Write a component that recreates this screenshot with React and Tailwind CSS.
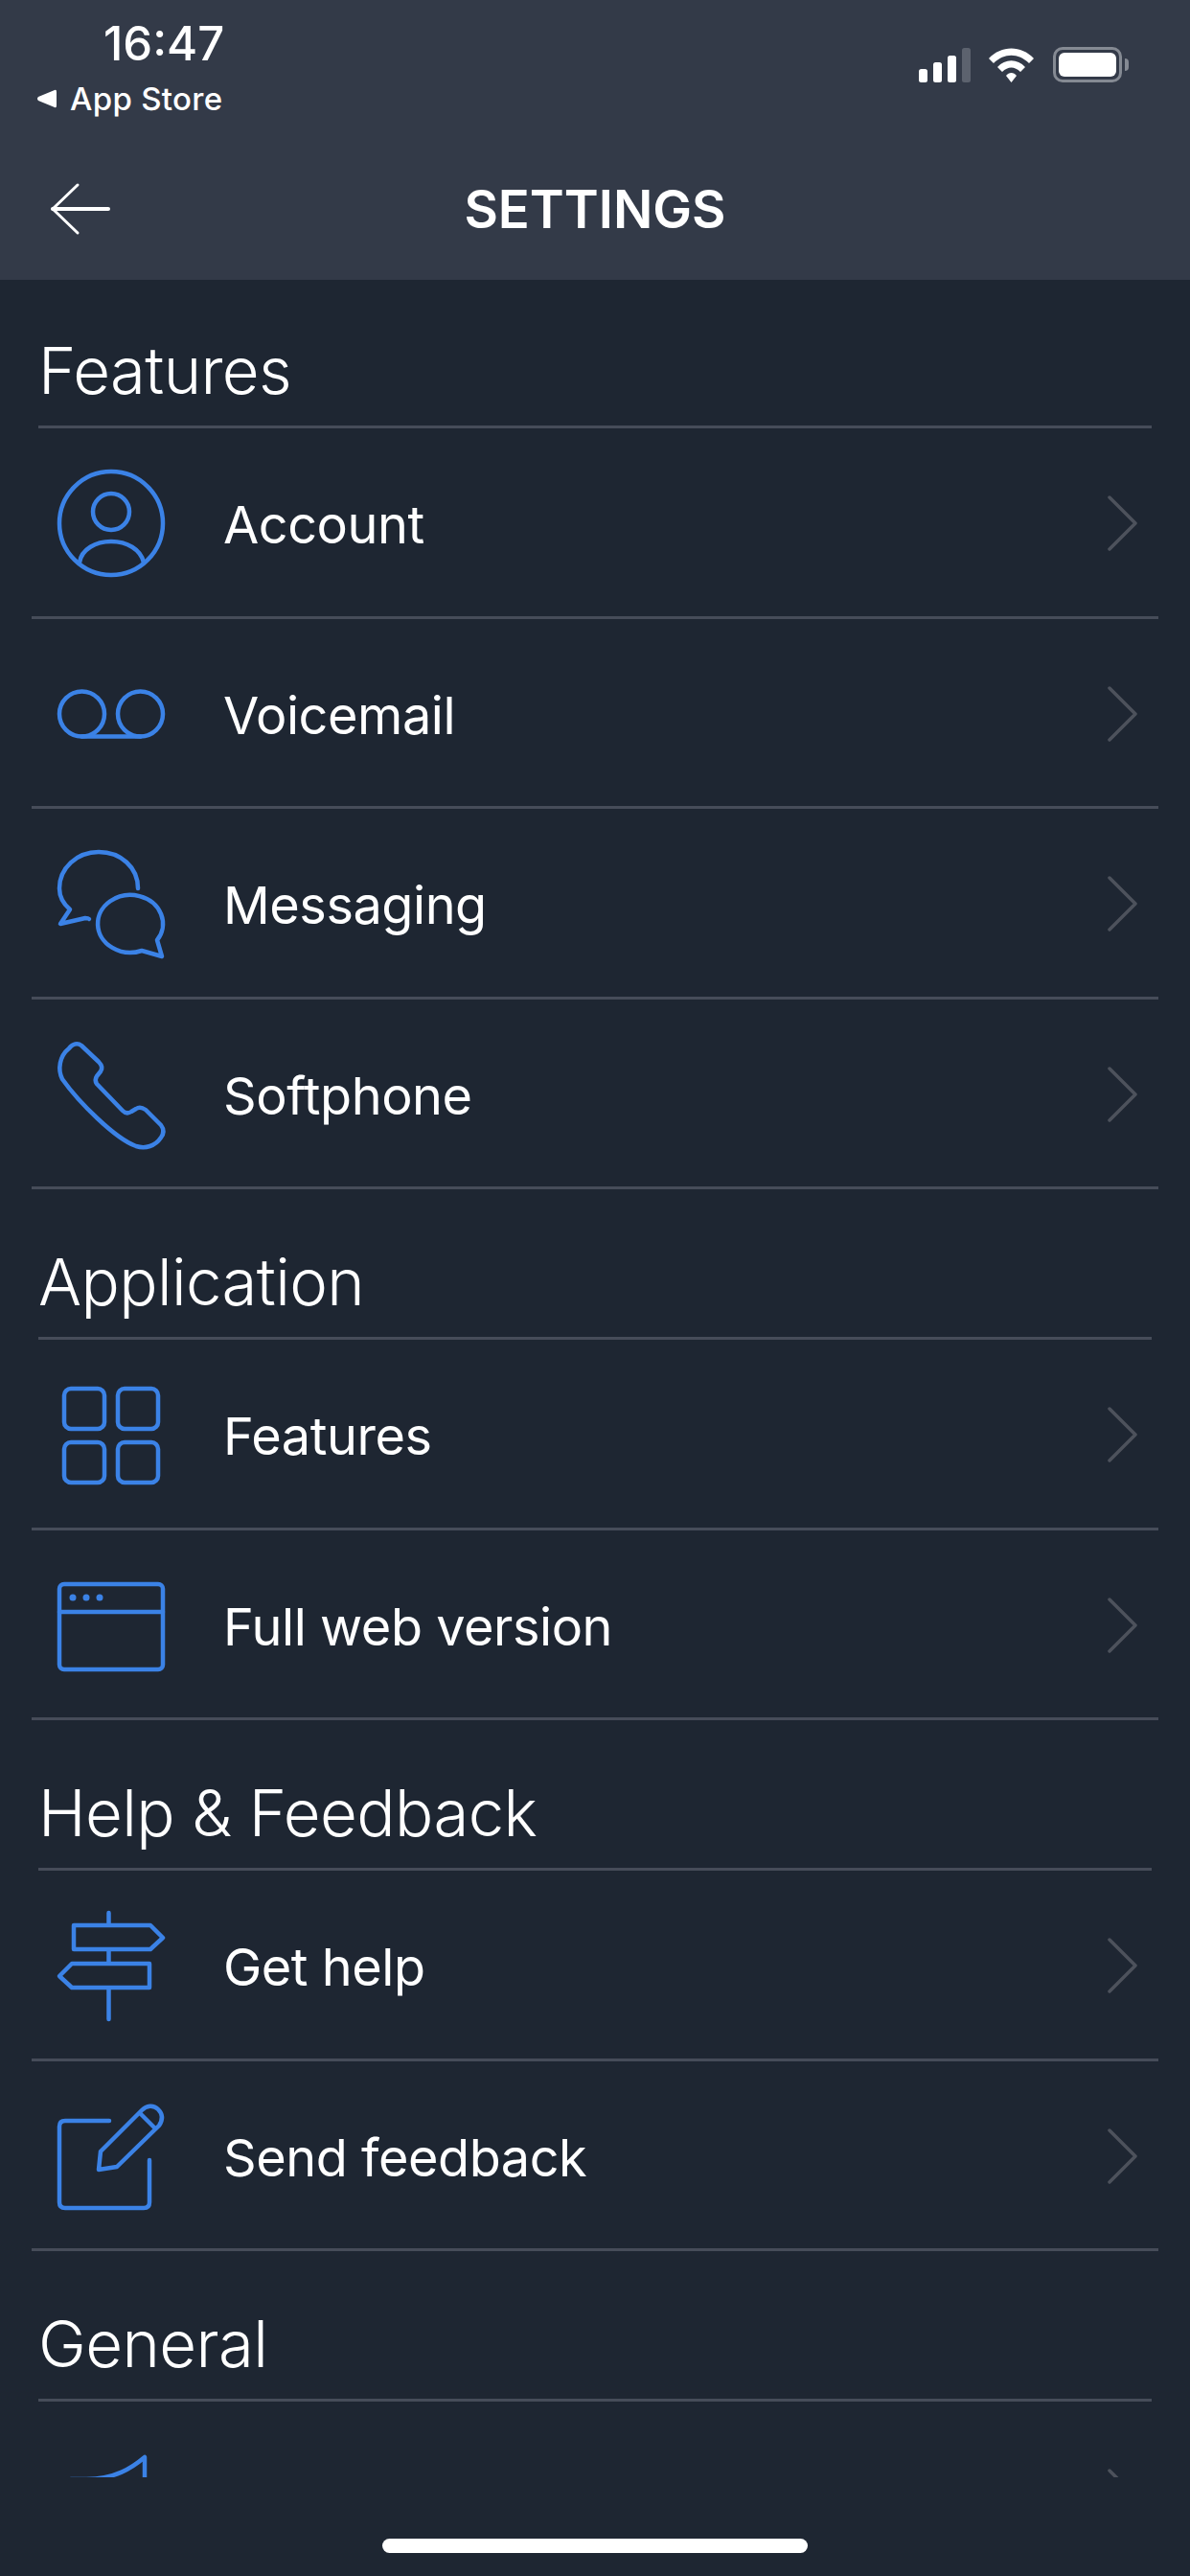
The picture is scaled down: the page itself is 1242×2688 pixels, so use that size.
const icons = {
    account: (
        <>
            <circle cx="56" cy="56" r="54" />
            <circle cx="56" cy="44" r="19" />
            <path d="M23 97C25 83 40 75 56 75C72 75 87 83 90 97" />
        </>
    ),
    voicemail: (
        <>
            <circle cx="25.5" cy="56" r="23.5" />
            <circle cx="86.5" cy="56" r="23.5" />
            <path d="M25.5 79.5H86.5" />
        </>
    ),
    messaging: (
        <>
            <path d="M84 40C84 18 66 2 43 2C20 2 2 19 2 40C2 48 6 56 13 62L3 77L29 71C31 71 32 71 33 72" />
            <path d="M88 105A34 30 0 1 1 104 94L109 111L88 105Z" />
        </>
    ),
    phone: (
        <path d="M12 8C16 3 21 2 25 5L43 22C47 26 47 29 45 32L41 37C39 40 39 42 41 45L68 73C71 76 74 76 77 74L82 71C85 69 89 70 92 72L108 88C111 92 111 97 108 101C102 110 92 113 82 110C60 102 22 64 5 40C0 30 2 16 12 8Z" />
    ),
    grid: (
        <>
            <rect x="7" y="8" width="42" height="42" rx="7" />
            <rect x="63" y="8" width="42" height="42" rx="7" />
            <rect x="7" y="64" width="42" height="42" rx="7" />
            <rect x="63" y="64" width="42" height="42" rx="7" />
        </>
    ),
    web: (
        <>
            <rect x="2" y="13" width="108" height="89" rx="5" />
            <path d="M2 42H110" />
            <circle cx="16" cy="27" r="3.5" fill="#3b82e6" stroke="none" />
            <circle cx="30" cy="27" r="3.5" fill="#3b82e6" stroke="none" />
            <circle cx="44" cy="27" r="3.5" fill="#3b82e6" stroke="none" />
        </>
    ),
    signpost: (
        <>
            <path d="M53.5 1V12M53.5 41V52M53.5 81V112" />
            <path d="M17 14H97L110 27L97 39H17Z" />
            <path d="M96 54H15L2 67L15 79H96Z" />
        </>
    ),
    feedback: (
        <>
            <path d="M54 19H8Q2 19 2 25V104Q2 110 8 110H90Q96 110 96 104V60" />
            <path d="M43 70L45 51L88 8C93 3 100 2 105 7C110 12 110 18 106 24L62 67Z" />
            <path d="M86 11L102 27" />
        </>
    ),
    megaphone: (
        <path d="M91 15V90C78 78 60 72 38 72H14V38H30C60 38 78 26 91 15Z" />
    ),
};

const sections = [
    {
        title: "Features",
        rows: [
            { label: "Account", icon: "account" },
            { label: "Voicemail", icon: "voicemail" },
            { label: "Messaging", icon: "messaging" },
            { label: "Softphone", icon: "phone" },
        ],
    },
    {
        title: "Application",
        rows: [
            { label: "Features", icon: "grid" },
            { label: "Full web version", icon: "web" },
        ],
    },
    {
        title: "Help & Feedback",
        rows: [
            { label: "Get help", icon: "signpost" },
            { label: "Send feedback", icon: "feedback" },
        ],
    },
    {
        title: "General",
        rows: [{ label: "Dialing", icon: "megaphone" }],
    },
];

function RowIcon({ name }) {
    return (
        <svg
            viewBox="0 0 112 112"
            fill="none"
            stroke="#3b82e6"
            strokeWidth="4.5"
            strokeLinecap="round"
            strokeLinejoin="round"
            className="w-[112px] h-[112px] shrink-0 overflow-visible"
        >
            {icons[name]}
        </svg>
    );
}

function SettingsRow({ label, icon }) {
    return (
        <div className="h-[198.5px] mx-[33px] pt-[3px] pl-[27px] pr-[21px] flex items-center border-b-[3px] border-[#464c59]">
            <RowIcon name={icon} />
            <span className="ml-[61px] mt-[4px] flex-1 text-[54px] leading-none tracking-[-0.45px] text-white">
                {label}
            </span>
            <svg
                viewBox="0 0 33 58"
                fill="none"
                stroke="#4d525c"
                strokeWidth="3.5"
                strokeLinecap="round"
                strokeLinejoin="round"
                className="w-[33px] h-[58px] shrink-0"
            >
                <path d="M3 2L30 29L3 56" />
            </svg>
        </div>
    );
}

function Section({ title, rows }) {
    return (
        <section className="group">
            <div className="h-[157px] group-first:h-[155px] mx-[40px] pb-[24px] flex items-end border-b-[3px] border-[#464c59]">
                <h2 className="text-[67px] leading-none tracking-[-0.6px] font-[350] text-white">
                    {title}
                </h2>
            </div>
            {rows.map((row) => (
                <SettingsRow key={row.label} {...row} />
            ))}
        </section>
    );
}

function StatusIcons() {
    return (
        <div className="flex items-center mt-[49px] mr-[64px]">
            <svg viewBox="0 0 55 36" className="w-[55px] h-[36px]" fill="#ffffff">
                <rect x="0" y="22" width="9" height="14" rx="2.5" />
                <rect x="15" y="15" width="9" height="21" rx="2.5" />
                <rect x="30" y="8" width="9" height="28" rx="2.5" />
                <rect x="45" y="0" width="9" height="36" rx="2.5" fill="#5c626e" />
            </svg>
            <svg viewBox="0 0 47 36" className="w-[47px] h-[36px] ml-[18px]" fill="#ffffff">
                <path d="M0 11C13 -3 34 -3 47 11L42 16C31 5 16 5 5 16Z" />
                <path d="M9 20C17 11 30 11 38 20L33 25C27 19 20 19 14 25Z" />
                <path d="M18 29C21 25 26 25 29 29L23.5 36Z" />
            </svg>
            <div className="ml-[20px] w-[72px] h-[37px] p-[3px] rounded-[10px] border-[3px] border-[#858a93]">
                <div className="w-full h-full rounded-[6px] bg-white"></div>
            </div>
            <div className="ml-[3px] w-[4px] h-[13px] rounded-r-full bg-[#858a93]"></div>
        </div>
    );
}

function Header() {
    return (
        <header className="h-[292px] shrink-0 bg-[#333a48] text-white">
            <div className="h-[173px] flex justify-between items-start">
                <div>
                    <div className="ml-[108px] mt-[22px] text-[49px] leading-[48px] font-medium">
                        16:47
                    </div>
                    <div className="ml-[38px] mt-[15px] flex items-center">
                        <svg viewBox="0 0 21 20" className="w-[21px] h-[20px]" fill="#ffffff">
                            <path d="M19 1Q21 0 21 3V17Q21 20 19 19L2 12Q0 10 2 8Z" />
                        </svg>
                        <span className="ml-[14px] text-[33px] leading-[36px] tracking-[0.3px] font-medium">
                            App Store
                        </span>
                    </div>
                </div>
                <StatusIcons />
            </div>
            <div className="h-[90px] px-[52px] flex items-center justify-between">
                <svg
                    viewBox="0 0 64 56"
                    fill="none"
                    stroke="#ffffff"
                    strokeWidth="3"
                    strokeLinecap="round"
                    strokeLinejoin="round"
                    className="w-[64px] h-[56px]"
                >
                    <path d="M29 3L3 28L29 53" />
                    <path d="M3 28H61" strokeWidth="4" />
                </svg>
                <h1 className="text-[54.5px] leading-none font-semibold">SETTINGS</h1>
                <div className="w-[64px] h-[56px]"></div>
            </div>
        </header>
    );
}

export default function App() {
    return (
        <div className="w-[1242px] h-[2688px] flex flex-col bg-[#1e2632] overflow-hidden font-['Inter',sans-serif]">
            <Header />
            <main className="h-[2293px] shrink-0 overflow-hidden">
                {sections.map((section) => (
                    <Section key={section.title} {...section} />
                ))}
            </main>
            <div className="flex-1 flex justify-center pt-[64px]">
                <div className="w-[444px] h-[15px] rounded-full bg-white"></div>
            </div>
        </div>
    );
}
